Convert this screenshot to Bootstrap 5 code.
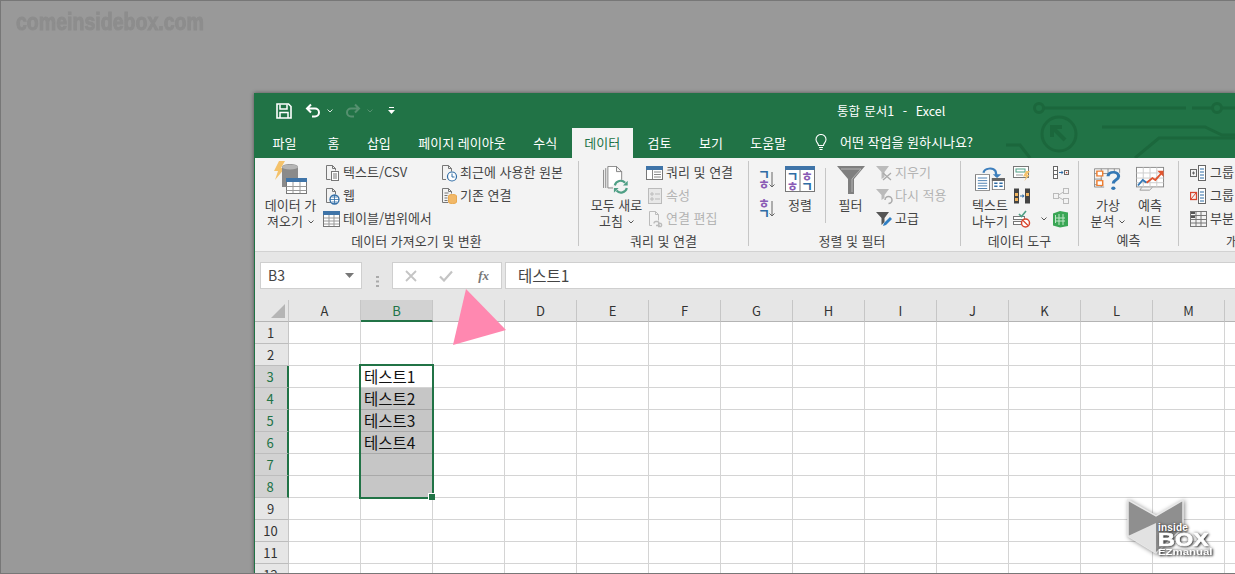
<!DOCTYPE html>
<html lang="ko">
<head>
<meta charset="utf-8">
<title>통합 문서1 - Excel</title>
<link href="https://cdn.jsdelivr.net/npm/bootstrap@5.3.0/dist/css/bootstrap.min.css" rel="stylesheet">
<style>
html,body{margin:0;height:574px;overflow:hidden;background:#999}
body{font-family:"Noto Sans CJK KR","Liberation Sans",sans-serif;font-size:13px;line-height:16px;color:#444}
svg{display:block;flex-shrink:0}
.desk{height:574px;border:1px solid #777;border-right:0;padding:92px 0 0 253px;background:#999;overflow:hidden}
.wmark{left:15px;top:8px;font-family:"Liberation Sans",sans-serif;font-weight:700;font-size:23px;line-height:26px;color:#8d8d8d;-webkit-text-stroke:1px #8d8d8d;transform:scaleX(.85);transform-origin:left center;white-space:nowrap}
.xwin{width:982px;height:481px;background:#fff;border-left:1px solid #217346;box-shadow:0 0 4px rgba(0,0,0,.45);overflow:hidden}
.xhead{background:#217346;height:65px;color:#fff}
.circuit{right:0;top:0}
.ttlbar{height:35px;z-index:1}
.qat{padding-left:21px;gap:0}
.qsave{margin-right:13px}
.qchev{margin:0 12px 0 6px}
.qlast{margin-left:3px}
.ttltxt{left:582px;top:10px;font-size:12.5px;white-space:pre;word-spacing:.8px}
.tabs{height:30px;z-index:1;padding-left:3.75px}
.xtab{padding:7px 13.75px 0;height:30px;white-space:nowrap;color:#fff}
.xtab-first{margin-right:3.5px}
.xtab-on{background:#f3f3f3;color:#217346;padding:7px 12.5px 0;margin-left:1px;margin-right:1px}
.tellme{margin-left:15px;gap:13px;padding-top:6px;color:#fff;white-space:nowrap}
.rib{height:94px;background:#f3f3f3;border-bottom:1px solid #d2d2d2;padding-top:3px}
.rgrp{height:85px;border-right:1px solid #c6c6c6;flex-shrink:0}
.rb{height:71px}
.rl{height:14px;line-height:16px;white-space:nowrap;margin-top:3px}
.g1{width:324px;padding-left:3px}.g2{width:170px;padding-left:8px}.g3{width:212px;padding-left:9px}.g4{width:118px;padding-left:6px}.g5{width:100px;padding-left:5px}.g6{width:200px;padding-left:11px;border-right:0}
.g1 .rl{margin-left:-3px}.g2 .rl{margin-left:-8px}.g3 .rl{margin-left:-9px;padding-right:5px}.g4 .rl{margin-left:-6px}.g5 .rl{margin-left:-5px}.g6 .rl{padding-left:36px;text-align:left!important}
.big{flex-shrink:0;text-align:center;line-height:16px;white-space:nowrap}
.bico{height:36px}
.bico-low{padding-top:5px}
.w65{width:65px}.w59{width:59px}.w40{width:40px}.w49{width:49px}.w46{width:46px}.w48{width:48px}.w36{width:36px}
.col117{width:117px}.col39{width:39px}.col22{width:22px}
.rbtn{height:23px;gap:2px;white-space:nowrap}
.rbtn span{margin-bottom:2px}
.off{color:#b4b4b4}
.vsep{width:1px;height:55px;background:#c6c6c6;margin:7px 0 0 5px}
.mchev{display:inline-block;vertical-align:middle;margin-left:5px}
.sortcol{gap:7px;padding-top:7px}
.sico{overflow:visible;font-family:"Noto Sans CJK KR",sans-serif;font-weight:700;font-size:13px}
.fbar{height:48px;background:#e6e6e6;padding:10px 0 0 5px}
.nbox,.fbtns,.finp{height:27px;background:#fff;border:1px solid #cfcfcf;flex-shrink:0}
.nbox{width:102px;padding:0 7px;font-size:14px;color:#444;line-height:25px}
.ndots{width:30px;flex-shrink:0}
.fbtns{width:110px;padding:0 12px}
.fxt{font-family:"Liberation Serif",serif;font-style:italic;font-weight:700;font-size:13px;color:#777;width:14px;text-align:right}
.finp{margin-left:3px;width:760px;padding-left:12px;font-size:15.5px;line-height:25px;color:#444}
.xgrid{display:grid;grid-template-columns:34px repeat(14,72px);grid-auto-rows:22px;width:1042px}
.ch,.rh{background:#e6e6e6;border-right:1px solid #c6c6c6;border-bottom:1px solid #b4b4b4;color:#333;line-height:21px;text-align:center}
.rh{border-bottom-color:#bdbdbd;padding-right:2px}
.gc{border-right:1px solid #d4d4d4;border-bottom:1px solid #d4d4d4;font-size:15.5px;line-height:21px;padding-left:3px;color:#111;white-space:nowrap}
.corner{background:#e6e6e6;border-right:1px solid #c6c6c6;border-bottom:1px solid #b4b4b4;padding:4px 0 0 16px}
.ch-on{background:#d2d2d2;color:#217346;border-bottom:2px solid #217346}
.rh-on{background:#d2d2d2;color:#217346;border-right:2px solid #217346}
.gc-sel{background:#c6c6c6;border-color:#a9a9a9}
.selbox{left:104px;top:64px;width:75px;height:135px;border:2px solid #217346}
.selhd{right:-3px;bottom:-3px;width:7px;height:7px;background:#217346;border:1px solid #fff;border-right:0;border-bottom:0}
.pinkarrow{left:451px;top:288px}
.logo{left:1122px;top:494px;width:100px;height:64px}
.logoart{filter:drop-shadow(1px 1px 2px rgba(0,0,0,.45))}
.logotxt{left:35px;top:27px;color:#fff;font-family:"Liberation Sans",sans-serif;font-weight:700;text-shadow:1px 1px 2px #333,0 0 3px #444}
.l1{font-size:10px;line-height:11px;letter-spacing:.2px}
.l2{font-size:18px;line-height:14px;font-weight:900;-webkit-text-stroke:.6px #fff;transform:scaleX(1.3);transform-origin:left center}
.l3{font-size:9.5px;line-height:9px;transform:scaleX(1.2);transform-origin:left center}
</style>
</head>
<body>
<div class="desk position-relative">
  <div class="wmark position-absolute">comeinsidebox.com</div>

  <div class="xwin">
    <div class="xhead position-relative">
      <svg class="circuit position-absolute" width="230" height="65" viewBox="0 0 230 65" fill="none" stroke="#1b673c" stroke-width="3">
        <path d="M36 15H180"/><circle cx="33" cy="15" r="4.5"/><circle cx="211" cy="15" r="4.5"/><path d="M186 15H206M216 15H230"/>
        <circle cx="53" cy="41" r="17"/><path d="M47 35l12 12M46 44v-10h10" stroke-width="4"/>
        <path d="M96 34H199l17 8h14"/><path d="M129 65l24-20h77"/><path d="M0 52h14l10 13"/>
      </svg>
      <div class="ttlbar position-relative d-flex align-items-center qat">
        <svg class="qsave" width="16" height="16" viewBox="0 0 16 16" fill="none" stroke="#fff"><path d="M1 1h11.5L15 3.5V15H1z" stroke-width="1.6"/><path d="M4 1.5V6h7V1.5M4 15V9.500h8V15" stroke-width="1.5"/></svg>
        <svg width="16" height="15" viewBox="0 0 16 15" fill="none" stroke="#fff" stroke-width="2"><path d="M6 1.500L2 5.500l4 4M2 5.500h8a4 4 0 0 1 0 8H7"/></svg>
        <svg class="qchev" width="6" height="4" viewBox="0 0 6 4" fill="none" stroke="#d5e6dc"><path d="M.5.500l2.500 2.500 2.500-2.500"/></svg>
        <svg width="16" height="15" viewBox="0 0 16 15" fill="none" stroke="#55906f" stroke-width="2"><path d="M10 1.500l4 4-4 4M14 5.500H6a4 4 0 0 0 0 8h3"/></svg>
        <svg class="qchev" width="6" height="4" viewBox="0 0 6 4" fill="none" stroke="#55906f"><path d="M.5.500l2.500 2.500 2.500-2.500"/></svg>
        <svg class="qlast" width="7" height="8" viewBox="0 0 7 8" fill="#fff"><path d="M1 0h5v1H1zM0 3h7L3.500 7z"/></svg>
      </div>
      <div class="ttltxt position-absolute">통합 문서1  -  Excel</div>
      <div class="tabs position-relative d-flex">
        <div class="xtab xtab-first">파일</div><div class="xtab">홈</div><div class="xtab">삽입</div><div class="xtab">페이지 레이아웃</div><div class="xtab">수식</div>
        <div class="xtab xtab-on">데이터</div><div class="xtab">검토</div><div class="xtab">보기</div><div class="xtab">도움말</div>
        <div class="tellme d-flex">
          <svg width="12" height="17" viewBox="0 0 12 17" fill="none" stroke="#fff" stroke-width="1.100"><path d="M3.500 11.500C3.500 9 1 8.500 1 5.500a5 5 0 0 1 10 0c0 3-2.500 3.500-2.500 6z"/><path d="M4 13.500h4M4.500 15.500h3"/></svg>
          <span>어떤 작업을 원하시나요?</span>
        </div>
      </div>
    </div>

    <div class="rib d-flex">
      <!-- 1 -->
      <div class="rgrp g1 d-flex flex-column">
        <div class="rb d-flex">
          <div class="big w65">
            <div class="bico d-flex justify-content-center">
              <svg width="38" height="36" viewBox="0 0 38 36"><path d="M7 0h6L9 7h4L3 19l3-9H2z" fill="#f4c26b"/><path d="M10 6c0-4 16-4 16 0v20H10z" fill="#8a8a8a"/><ellipse cx="18" cy="6" rx="8" ry="2.500" fill="#b5b5b5"/><rect x="14.500" y="17.500" width="20" height="15" fill="#fff" stroke="#777"/><rect x="14" y="17" width="21" height="4" fill="#3f74a8"/><path d="M14.500 25.500h20M14.500 29.500h20M21 21v11M28 21v11" stroke="#999"/></svg>
            </div>
            <div>데이터 가</div>
            <div>져오기<svg class="mchev" width="6" height="4" viewBox="0 0 6 4" fill="none" stroke="#555"><path d="M.5.500l2.500 2.500 2.500-2.500"/></svg></div>
          </div>
          <div class="col117">
            <div class="rbtn d-flex align-items-center">
              <svg width="18" height="18" viewBox="0 0 18 18" fill="none" stroke="#777"><path d="M3.500 15.500v-14h6l3 3v2"/><path d="M9.500 1.500v3h3"/><path d="M3.500 15.500h4"/><rect x="8.500" y="7.500" width="7" height="9" fill="#fff"/><path d="M10 10h4M10 12h4M10 14h4"/></svg><span>텍스트/CSV</span>
            </div>
            <div class="rbtn d-flex align-items-center">
              <svg width="18" height="18" viewBox="0 0 18 18" fill="none" stroke="#777"><path d="M8 15.500H3.500v-14h6l3 3v3"/><path d="M9.500 1.500v3h3"/><circle cx="11.500" cy="12.500" r="4.500" fill="#fff" stroke="#2f6ca5" stroke-width="1.300"/><path d="M7 12.500h9M11.500 8v9M8.500 10h6M8.500 15h6" stroke="#2f6ca5" stroke-width=".8"/></svg><span>웹</span>
            </div>
            <div class="rbtn d-flex align-items-center">
              <svg width="18" height="18" viewBox="0 0 18 18" fill="none"><rect x=".5" y="1.500" width="16" height="15" fill="#fff" stroke="#777"/><rect y="1" width="17" height="4" fill="#3f74a8"/><path d="M1 8h15M1 11h15M1 14h15M6 5v11M11 5v11" stroke="#999"/></svg><span>테이블/범위에서</span>
            </div>
          </div>
          <div>
            <div class="rbtn d-flex align-items-center">
              <svg width="18" height="18" viewBox="0 0 18 18" fill="none" stroke="#777"><path d="M6 15.500H2.500v-14h6l3 3v3"/><path d="M8.500 1.500v3h3"/><circle cx="12" cy="12.500" r="4.500" fill="#fff" stroke="#2f6ca5" stroke-width="1.200"/><path d="M12 9.500v3.500h2.500" stroke="#2f6ca5"/></svg><span>최근에 사용한 원본</span>
            </div>
            <div class="rbtn d-flex align-items-center">
              <svg width="18" height="18" viewBox="0 0 18 18" fill="none" stroke="#777"><path d="M8 15.500H2.500v-14h6l3 3v2"/><path d="M8.500 1.500v3h3M4.500 6h4M4.500 8.500h3M4.500 11h3M4.500 13.500h3"/><path d="M8.500 9c0-2 8-2 8 0v6c0 2-8 2-8 0z" fill="#f2b867" stroke="#e9a94f"/></svg><span>기존 연결</span>
            </div>
          </div>
        </div>
        <div class="rl text-center">데이터 가져오기 및 변환</div>
      </div>
      <!-- 2 -->
      <div class="rgrp g2 d-flex flex-column">
        <div class="rb d-flex">
          <div class="big w59">
            <div class="bico bico-low d-flex justify-content-center">
              <svg width="31" height="31" viewBox="0 0 34 36" fill="none"><path d="M2 4.500v21M4.500 2.500v23" stroke="#777"/><path d="M7 25.500V.5h10l6 6v10M17 .5v6h6" stroke="#777" fill="#fff"/><path d="M13 25.500H7" stroke="#777"/><circle cx="22" cy="24" r="8" fill="#f3f3f3"/><path d="M15 22.500a7 7 0 0 1 12-3M29 25.500a7 7 0 0 1-12 3" stroke="#4f9f85" stroke-width="2.500"/><path d="M24.500 22.500h5.500v-5.500zM19.500 25.500h-5.500v5.500z" fill="#4f9f85"/></svg>
            </div>
            <div>모두 새로</div>
            <div>고침<svg class="mchev" width="6" height="4" viewBox="0 0 6 4" fill="none" stroke="#555"><path d="M.5.500l2.500 2.500 2.500-2.500"/></svg></div>
          </div>
          <div>
            <div class="rbtn d-flex align-items-center">
              <svg width="18" height="18" viewBox="0 0 18 18" fill="none"><rect x=".5" y="2.500" width="16" height="13" fill="#fff" stroke="#777"/><rect y="2" width="17" height="4" fill="#3f74a8"/><path d="M8 8h7M8 10.500h7M8 13h7M6.500 6v9" stroke="#888"/></svg><span>쿼리 및 연결</span>
            </div>
            <div class="rbtn d-flex align-items-center off">
              <svg width="18" height="18" viewBox="0 0 18 18" fill="none" stroke="#bbb"><rect x="2.500" y="1.500" width="13" height="15" fill="#e8e8e8"/><path d="M5 6h2v2H5zM9 7h5M5 11h2v2H5zM9 12h5"/></svg><span>속성</span>
            </div>
            <div class="rbtn d-flex align-items-center off">
              <svg width="18" height="18" viewBox="0 0 18 18" fill="none" stroke="#bbb"><path d="M6 15.500H3.500v-14h6l3 3v6M9.500 1.500v3h3"/><path d="M8 13.500a2 2 0 0 1 2-2h1a2 2 0 0 1 0 4h-1M14 15.500a2 2 0 0 1-2 0M12 13.500h3a2 2 0 0 1 0 3h-3" stroke-width="1.300"/></svg><span>연결 편집</span>
            </div>
          </div>
        </div>
        <div class="rl text-center">쿼리 및 연결</div>
      </div>
      <!-- 3 -->
      <div class="rgrp g3 d-flex flex-column">
        <div class="rb d-flex">
          <div class="col22 d-flex flex-column sortcol">
            <svg class="sico" width="18" height="22" viewBox="0 0 18 22" fill="none"><text x="0" y="11" fill="#2f6ca5">ㄱ</text><text x="0" y="21" fill="#8a5bb5">ㅎ</text><path d="M14 4v15M11.500 16.500L14 19l2.500-2.500" stroke="#666"/></svg>
            <svg class="sico" width="18" height="22" viewBox="0 0 18 22" fill="none"><text x="0" y="11" fill="#8a5bb5">ㅎ</text><text x="0" y="21" fill="#2f6ca5">ㄱ</text><path d="M14 4v15M11.500 16.500L14 19l2.500-2.500" stroke="#666"/></svg>
          </div>
          <div class="big w40">
            <div class="bico bico-low d-flex justify-content-center">
              <svg class="sico" width="30" height="26" viewBox="0 0 30 26"><rect x=".5" y=".5" width="29" height="25" fill="#fff" stroke="#777"/><rect width="30" height="4" fill="#3f74a8"/><path d="M15 4v21" stroke="#777"/><text x="1.500" y="15" fill="#2f6ca5">ㄱ</text><text x="1.500" y="25" fill="#8a5bb5">ㅎ</text><text x="16" y="15" fill="#8a5bb5">ㅎ</text><text x="16" y="25" fill="#2f6ca5">ㄱ</text></svg>
            </div>
            <div>정렬</div>
          </div>
          <div class="vsep"></div>
          <div class="big w49">
            <div class="bico bico-low d-flex justify-content-center">
              <svg width="28" height="28" viewBox="0 0 28 28"><path d="M0 0h28L17 13v15h-6V13z" fill="#7f7f7f"/><path d="M4 3h20l-9 10v13" stroke="#b5b5b5" fill="none"/></svg>
            </div>
            <div>필터</div>
          </div>
          <div>
            <div class="rbtn d-flex align-items-center off">
              <svg width="18" height="18" viewBox="0 0 18 18" fill="#bbb"><path d="M1 2h13L9.500 8v5l-3 2V8z"/><path d="M8 9l8 7M16 9l-8 7" stroke="#aaa" stroke-width="1.300"/></svg><span>지우기</span>
            </div>
            <div class="rbtn d-flex align-items-center off">
              <svg width="18" height="18" viewBox="0 0 18 18" fill="#bbb"><path d="M1 2h13L9.500 8v3l-3 2V8z"/><path d="M10 13a3.500 3.500 0 1 1 3.500 3.500" fill="none" stroke="#aaa" stroke-width="1.500"/></svg><span>다시 적용</span>
            </div>
            <div class="rbtn d-flex align-items-center">
              <svg width="18" height="18" viewBox="0 0 18 18"><path d="M1 2h13L9.500 8v4l-3 3V8z" fill="#555"/><path d="M8 16l1-3 6-6 2 2-6 6z" fill="#2f7fc4"/></svg><span>고급</span>
            </div>
          </div>
        </div>
        <div class="rl text-center">정렬 및 필터</div>
      </div>
      <!-- 4 -->
      <div class="rgrp g4 d-flex flex-column">
        <div class="rb d-flex">
          <div class="big w46">
            <div class="bico bico-low d-flex justify-content-center">
              <svg width="30" height="27" viewBox="0 0 32 36" preserveAspectRatio="none" fill="none"><rect x=".5" y="11.500" width="15" height="21" fill="#fff" stroke="#777"/><path d="M3 16h10M3 19.500h10M3 23h10M3 26.500h10M3 30h10" stroke="#2f6ca5"/><rect x="18.500" y="16.500" width="13" height="15" fill="#fff" stroke="#777"/><rect x="18" y="16" width="14" height="4" fill="#666"/><path d="M20.500 23h3.500M26 23h3.500M20.500 27h3.500M26 27h3.500" stroke="#2f6ca5" stroke-width="2"/><path d="M9 9a7 7 0 0 1 13-2l1 7" stroke="#3d7fbd" stroke-width="2.400"/><path d="M19 11l4.500 5 4.500-5z" fill="#3d7fbd"/></svg>
            </div>
            <div>텍스트</div>
            <div>나누기</div>
          </div>
          <div class="col39">
            <div class="rbtn d-flex align-items-center">
              <svg width="18" height="18" viewBox="0 0 18 18" fill="none"><rect x=".5" y="2.500" width="15" height="11" fill="#fff" stroke="#777"/><rect x="3" y="5" width="9" height="3" stroke="#4f9f85"/><path d="M3 11h7" stroke="#999"/><path d="M13 7h4l-3 4h2.500l-5 6 1.500-4.500H10z" fill="#f4c26b"/></svg>
            </div>
            <div class="rbtn d-flex align-items-center">
              <svg width="18" height="18" viewBox="0 0 18 18" fill="none"><rect x="1" y="1.500" width="5" height="15" fill="#444"/><rect x="12" y="1.500" width="5" height="15" fill="#444"/><path d="M2 6h3v3H2zM13 6h3v3h-3zM2 11h3v3H2z" fill="#f0b35c"/><path d="M7 9h3.500" stroke="#2f6ca5"/><path d="M9.500 7l2 2-2 2z" fill="#2f6ca5"/></svg>
            </div>
            <div class="rbtn d-flex align-items-center">
              <svg width="18" height="18" viewBox="0 0 18 18" fill="none"><rect x=".5" y="6.500" width="11" height="3" fill="#fff" stroke="#777"/><rect x=".5" y="11.500" width="8" height="3" fill="#fff" stroke="#777"/><path d="M6 4l2.500 2.500L13 1" stroke="#4f9f85" stroke-width="1.600"/><circle cx="12.500" cy="13" r="4" fill="#fff" stroke="#d8452e" stroke-width="1.500"/><path d="M10 10.500l5 5" stroke="#d8452e" stroke-width="1.300"/></svg>
              <svg class="ms-2" width="6" height="4" viewBox="0 0 6 4" fill="none" stroke="#555"><path d="M.5.500l2.500 2.500 2.500-2.500"/></svg>
            </div>
          </div>
          <div>
            <div class="rbtn d-flex align-items-center">
              <svg width="18" height="18" viewBox="0 0 18 18" fill="none"><rect x="1.500" y="2.500" width="4" height="12" fill="#fff" stroke="#666"/><path d="M1.500 6.500h4M1.500 10.500h4" stroke="#666"/><path d="M7 8.500h3" stroke="#2f6ca5"/><path d="M9.500 6.500l2 2-2 2z" fill="#2f6ca5"/><rect x="12.500" y="6.500" width="4" height="4" stroke="#666"/><rect x="14" y="8" width="1.200" height="1.200" fill="#d8452e"/></svg>
            </div>
            <div class="rbtn d-flex align-items-center">
              <svg width="18" height="18" viewBox="0 0 18 18" fill="none" stroke="#bbb"><rect x="1.500" y="6.500" width="5" height="5"/><rect x="11.500" y="1.500" width="5" height="5"/><rect x="11.500" y="11.500" width="5" height="5"/><path d="M6.500 8l5-3M6.500 10l5 3"/></svg>
            </div>
            <div class="rbtn d-flex align-items-center">
              <svg width="18" height="18" viewBox="0 0 18 18"><path d="M1 3.500l7-2.500 8 1.500V16l-8 1.500-7-2z" fill="#3aa655"/><path d="M3.500 5v8M7 4v11M11 4v11M3 8h10M3 11h10" stroke="#bfe6c8" fill="none"/></svg>
            </div>
          </div>
        </div>
        <div class="rl text-center">데이터 도구</div>
      </div>
      <!-- 5 -->
      <div class="rgrp g5 d-flex flex-column">
        <div class="rb d-flex">
          <div class="big w48">
            <div class="bico bico-low d-flex justify-content-center">
              <svg width="29" height="27" viewBox="0 0 30 34" preserveAspectRatio="none" fill="none"><path d="M.5 3.500h26M.5 9.500h14M.5 16.500h8M.5 23.500h9M.5 3.500v23h10M7.500 3.500v23M14.500 3.500v7M21 3.500v5M26.500 3.500v5" stroke="#888"/><rect x="3" y="6.500" width="6" height="6" fill="#fff" stroke="#ed7d31" stroke-width="1.500"/><rect x="3" y="18.500" width="6" height="6" fill="#fff" stroke="#ed7d31" stroke-width="1.500"/><path d="M14.500 13c0-7 11-7 11 0 0 5-5.500 4-5.500 9" stroke="#3478b5" stroke-width="3.200"/><circle cx="20" cy="28" r="2.200" fill="#3478b5"/></svg>
            </div>
            <div>가상</div>
            <div>분석<svg class="mchev" width="6" height="4" viewBox="0 0 6 4" fill="none" stroke="#555"><path d="M.5.500l2.500 2.500 2.500-2.500"/></svg></div>
          </div>
          <div class="big w36">
            <div class="bico bico-low d-flex justify-content-center">
              <svg width="29" height="26" viewBox="0 0 30 28" preserveAspectRatio="none" fill="none"><rect x=".5" y="1.500" width="28" height="21" fill="#fff" stroke="#888"/><path d="M.5 7.500h28M.5 13h28M.5 18h28M7.500 1.500v21M14.500 1.500v21M21.500 1.500v21" stroke="#ccc"/><path d="M2 21l5-6 4 3" stroke="#3478b5" stroke-width="2"/><path d="M11 18l6-5 3 2 7-8" stroke="#e0552f" stroke-width="2"/><path d="M22 5h6.500v6.500z" fill="#e0552f"/><path d="M6 23l-2 3h10l3-3" stroke="#999"/></svg>
            </div>
            <div>예측</div>
            <div>시트</div>
          </div>
        </div>
        <div class="rl text-center">예측</div>
      </div>
      <!-- 6 -->
      <div class="rgrp g6 d-flex flex-column">
        <div class="rb">
          <div class="rbtn d-flex align-items-center">
            <svg width="18" height="18" viewBox="0 0 18 18" fill="none"><rect x=".5" y="5.500" width="6" height="7" stroke="#666"/><path d="M2 9h3M3.500 7.500v3" stroke="#666"/><rect x="8.500" y="1.500" width="7" height="15" fill="#fff" stroke="#666"/><path d="M10 5h4M10 8h4M10 11h4M10 14h4" stroke="#2f6ca5"/></svg><span>그룹</span>
          </div>
          <div class="rbtn d-flex align-items-center">
            <svg width="18" height="18" viewBox="0 0 18 18" fill="none"><rect x=".5" y="5.500" width="6" height="7" stroke="#d8452e" stroke-width="1.300"/><path d="M1 12l5-6" stroke="#d8452e"/><rect x="8.500" y="1.500" width="7" height="15" fill="#fff" stroke="#666"/><path d="M10 5h4M10 8h4M10 11h4M10 14h4" stroke="#2f6ca5"/></svg><span>그룹</span>
          </div>
          <div class="rbtn d-flex align-items-center">
            <svg width="18" height="18" viewBox="0 0 18 18" fill="none" stroke="#777"><rect x=".5" y="1.500" width="16" height="15"/><path d="M.5 5.500h16M.5 9.500h16M.5 13h16M6 1.500v15M11 1.500v15"/><path d="M1 3h4M1 7h4" stroke="#555" stroke-width="2"/></svg><span>부분</span>
          </div>
        </div>
        <div class="rl">개요</div>
      </div>
    </div>

    <div class="fbar d-flex">
      <div class="nbox d-flex justify-content-between align-items-center"><span>B3</span><svg width="9" height="5" viewBox="0 0 9 5" fill="#777"><path d="M0 0h9L4.500 5z"/></svg></div>
      <div class="ndots d-flex justify-content-center align-items-center"><svg width="3" height="11" viewBox="0 0 3 11" fill="#aaa"><path d="M0 0h3v2H0zM0 4.500h3v2H0zM0 9h3v2H0z"/></svg></div>
      <div class="fbtns d-flex justify-content-between align-items-center">
        <svg width="12" height="12" viewBox="0 0 12 12" fill="none" stroke="#c4c4c4" stroke-width="1.800"><path d="M1 1l10 10M11 1L1 11"/></svg>
        <svg class="ms-2" width="14" height="12" viewBox="0 0 14 12" fill="none" stroke="#c4c4c4" stroke-width="2.200"><path d="M1 6.500l4 4 8-9"/></svg>
        <span class="fxt ms-2">fx</span>
      </div>
      <div class="finp">테스트1</div>
    </div>

    <div class="position-relative">
      <div class="xgrid" id="xgrid"></div>
      <div class="selbox position-absolute"><div class="selhd position-absolute"></div></div>
    </div>
  </div>

  <svg class="pinkarrow position-absolute" width="55" height="57" viewBox="0 0 55 57"><path d="M14 0L54 41 1 56z" fill="#ff88b0"/></svg>

  <div class="logo position-absolute">
    <svg class="logoart" width="100" height="64" viewBox="0 0 100 64"><path d="M5 5L33 21 60 5V33L33 58 5 41z" fill="#8f8f8f" stroke="#e8e8e8" stroke-width="1.500"/><path d="M5 41L33 28V58z" fill="#e2e2e2"/></svg>
    <div class="logotxt position-absolute"><div class="l1">inside</div><div class="l2">BOX</div><div class="l3">EZmanual</div></div>
  </div>
</div>

<script>
(function(){
  var g=document.getElementById('xgrid'),h='<div class="corner"><svg width="14" height="14" viewBox="0 0 14 14" fill="#b5b5b5"><path d="M14 0v14H0z"/></svg></div>';
  var cols='ABCDEFGHIJKLMN'.split('');
  cols.forEach(function(c){h+='<div class="ch'+(c==='B'?' ch-on':'')+'">'+c+'</div>';});
  var t={3:'테스트1',4:'테스트2',5:'테스트3',6:'테스트4'};
  for(var r=1;r<=12;r++){
    var on=r>=3&&r<=8;
    h+='<div class="rh'+(on?' rh-on':'')+'">'+r+'</div>';
    cols.forEach(function(c){
      var sel=c==='B'&&r>=4&&r<=8;
      h+='<div class="gc'+(sel?' gc-sel':'')+'">'+(c==='B'&&t[r]?t[r]:'')+'</div>';
    });
  }
  g.innerHTML=h;
})();
</script>
<script src="https://cdn.jsdelivr.net/npm/bootstrap@5.3.0/dist/js/bootstrap.bundle.min.js"></script>
</body>
</html>
